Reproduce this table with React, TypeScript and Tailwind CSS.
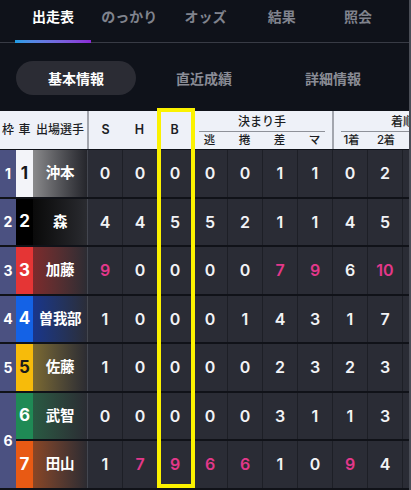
import React from "react";

type Row = {
  waku?: string;
  wakuSpan?: boolean;
  car: string;
  carCls: string;
  nameCls: string;
  name: string;
  vals: number[];
  pink: number[];
};

const rows: Row[] = [
  { waku: "1", car: "1", carCls: "bg-[#f3f4f9] text-[#15161a]", nameCls: "bg-linear-to-r from-[#8a8a8c] to-[#25262c]", name: "沖本", vals: [0, 0, 0, 0, 0, 1, 1, 0, 2], pink: [] },
  { waku: "2", car: "2", carCls: "bg-[#000000] text-white", nameCls: "bg-linear-to-r from-[#0a0a0a] to-[#2a2b30]", name: "森", vals: [4, 4, 5, 5, 2, 1, 1, 4, 5], pink: [] },
  { waku: "3", car: "3", carCls: "bg-[#e53535] text-white", nameCls: "bg-linear-to-r from-[#7d2a2c] to-[#2c2c33]", name: "加藤", vals: [9, 0, 0, 0, 0, 7, 9, 6, 10], pink: [0, 5, 6, 8] },
  { waku: "4", car: "4", carCls: "bg-[#1462e6] text-white", nameCls: "bg-linear-to-r from-[#19358c] to-[#2b2d38]", name: "曽我部", vals: [1, 0, 0, 0, 1, 4, 3, 1, 7], pink: [] },
  { waku: "5", car: "5", carCls: "bg-[#f7bb0a] text-[#1a1a1a]", nameCls: "bg-linear-to-r from-[#7c6a30] to-[#2c2c32]", name: "佐藤", vals: [1, 0, 0, 0, 0, 2, 3, 2, 3], pink: [] },
  { waku: "6", wakuSpan: true, car: "6", carCls: "bg-[#1f8a55] text-white", nameCls: "bg-linear-to-r from-[#285a42] to-[#2a2c33]", name: "武智", vals: [0, 0, 0, 0, 0, 3, 1, 1, 3], pink: [] },
  { car: "7", carCls: "bg-[#e85a14] text-white", nameCls: "bg-linear-to-r from-[#8a4624] to-[#2c2b31]", name: "田山", vals: [1, 7, 9, 6, 6, 1, 0, 9, 4], pink: [1, 2, 3, 4, 7] },
];

const tabs = ["出走表", "のっかり", "オッズ", "結果", "照会"];

export default function App() {
  return (
    <div
      className="relative w-[411px] h-[490px] overflow-hidden bg-[#0f121a]"
      style={{ fontFamily: 'Inter, "Noto Sans CJK JP", sans-serif' }}
    >
      {/* Top tabs */}
      <div className="relative flex h-[43px] px-[15px] border-b border-[#383b45]">
        {tabs.map((t, i) => (
          <div
            key={t}
            className={`relative flex-1 flex justify-center pt-[7px] text-[14px] leading-[20px] font-bold ${
              i === 0 ? "text-white" : "text-[#80838d]"
            }`}
          >
            {t}
            {i === 0 && (
              <div className="absolute left-0 right-0 bottom-[-1px] h-[3px] bg-linear-to-r from-[#1a9de6] to-[#8a28d6]" />
            )}
          </div>
        ))}
      </div>

      {/* Segmented control */}
      <div className="flex mt-[18px] pl-[16px] h-[34px] text-[14px] font-bold">
        <div className="w-[120px] rounded-full bg-[#2b2c34] text-white flex items-center justify-center">
          基本情報
        </div>
        <div className="w-[136px] text-[#8a8c95] flex items-center justify-center">直近成績</div>
        <div className="w-[122px] text-[#8a8c95] flex items-center justify-center">詳細情報</div>
      </div>

      {/* Table */}
      <div className="mt-[16px] w-[472px]">
        {/* Header */}
        <div className="flex h-[38px] bg-[#eef1f8] text-[#1c1e24] text-[12px] font-medium">
          <div className="w-[16px] flex items-center justify-center">枠</div>
          <div className="w-[17px] flex items-center justify-center">車</div>
          <div className="w-[54px] flex items-center justify-center">出場選手</div>
          <div className="w-[35px] border-l-2 border-[#a3a6ae] flex items-center justify-center font-semibold text-[12.5px]">S</div>
          <div className="w-[35px] flex items-center justify-center font-semibold text-[12.5px]">H</div>
          <div className="w-[35px] flex items-center justify-center font-semibold text-[12.5px]">B</div>
          <div className="w-[140px] flex flex-col">
            <div className="h-[19px] flex items-end justify-center leading-[16px]">決まり手</div>
            <div className="mx-[7px] mt-[1px] h-px bg-[#8e9199]" />
            <div className="flex flex-1">
              {["逃", "捲", "差", "マ"].map((s) => (
                <div key={s} className="w-[35px] flex items-center justify-center text-[11.5px]">{s}</div>
              ))}
            </div>
          </div>
          <div className="w-[140px] border-l-2 border-[#a3a6ae] flex flex-col">
            <div className="h-[19px] flex items-end justify-center leading-[16px]">着順</div>
            <div className="mx-[7px] mt-[1px] h-px bg-[#8e9199]" />
            <div className="flex flex-1">
              {["1着", "2着", "3着", "着外"].map((s) => (
                <div key={s} className="w-[35px] flex items-center justify-center text-[11.5px] tracking-[-0.5px]">{s}</div>
              ))}
            </div>
          </div>
        </div>

        {/* Body */}
        <div className="mt-px grid grid-cols-[16px_17px_54px_repeat(11,35px)] grid-rows-[repeat(7,46.5px)] gap-y-[2px] pb-[2px] bg-[#101218]">
          {rows.map((r, ri) => (
            <React.Fragment key={ri}>
              {r.waku && (
                <div
                  className={`col-start-1 flex items-center justify-center bg-[#4b5181] text-white text-[14px] font-bold ${
                    r.wakuSpan ? "row-span-2" : ""
                  }`}
                >
                  {r.waku}
                </div>
              )}
              <div className={`col-start-2 flex items-center justify-center text-[17px] font-bold ${r.carCls}`}>
                {r.car}
              </div>
              <div className={`flex items-center justify-center text-white text-[14.5px] font-bold tracking-[-0.3px] ${r.nameCls}`}>
                {r.name}
              </div>
              {Array.from({ length: 11 }).map((_, ci) => {
                const v = r.vals[ci];
                const isPink = r.pink.includes(ci);
                return (
                  <div
                    key={ci}
                    className={`flex items-center justify-center bg-[#2a2c35] text-[16px] font-semibold ${
                      ci === 0 ? "border-l border-[#43464f]" : "border-l border-[#1d1f26]"
                    } ${isPink ? "text-[#e3388a]" : "text-[#f2f3f5]"}`}
                  >
                    {v !== undefined ? v : ""}
                  </div>
                );
              })}
            </React.Fragment>
          ))}
        </div>
      </div>

      {/* Right edge line */}
      <div className="absolute top-0 bottom-0 left-[409px] w-[2px] bg-[#4a4d56]" />

      {/* Yellow highlight box */}
      <div className="absolute left-[157px] top-[108px] w-[38px] h-[380px] border-4 border-[#fbf200]" />
    </div>
  );
}
